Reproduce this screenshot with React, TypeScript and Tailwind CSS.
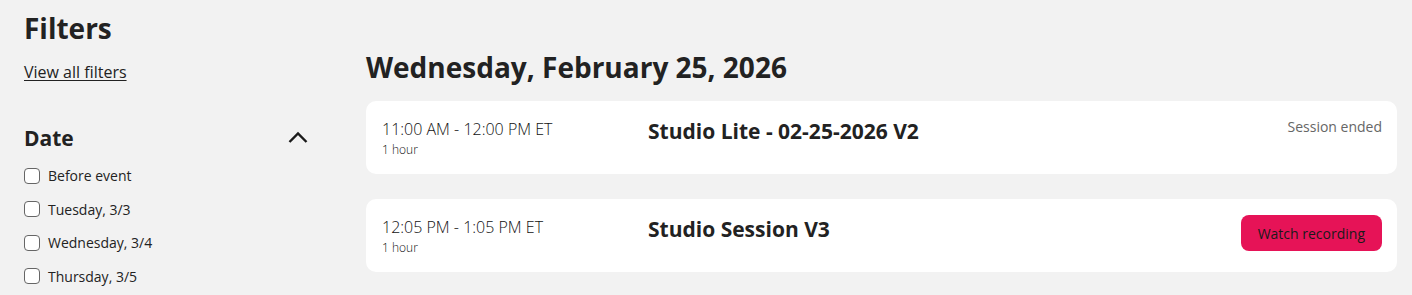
import React from "react";

const font = { fontFamily: '"Open Sans", "Noto Sans", sans-serif' };

function Checkbox({ label }: { label: string }) {
  return (
    <label className="flex items-center h-[33.5px] gap-2 text-[14px] text-[#222]">
      <span className="w-4 h-4 rounded-[4px] border border-[#666] bg-white shrink-0" />
      <span>{label}</span>
    </label>
  );
}

function Card({
  time,
  title,
  right,
}: {
  time: string;
  title: string;
  right: React.ReactNode;
}) {
  return (
    <div className="flex bg-white rounded-[10px] h-[73px] pl-4 pr-[15px] pt-[16px]">
      <div className="w-[266px] shrink-0">
        <div className="text-[16px] font-light leading-[24px] text-[#111]">{time}</div>
        <div className="text-[12px] font-light leading-[16px] mt-[1px] text-[#111]">1 hour</div>
      </div>
      <div className="flex-1 text-[21px] font-bold leading-[28px] text-[#222]">{title}</div>
      <div className="shrink-0 pt-[1px]">{right}</div>
    </div>
  );
}

export default function App() {
  return (
    <div className="w-[1412px] h-[295px] bg-[#f2f2f2] overflow-hidden flex" style={font}>
      <aside className="w-[366px] shrink-0 pl-6 pr-[56px] pt-[10px]">
        <h1 className="text-[28px] font-bold leading-[36px] text-[#222]">Filters</h1>
        <a className="block mt-[15px] text-[16px] leading-[22px] text-[#222] underline underline-offset-2">
          View all filters
        </a>
        <div className="mt-[40px] flex items-center justify-between">
          <h2 className="text-[21px] font-bold leading-[30px] text-[#222]">Date</h2>
          <svg width="22" height="14" viewBox="0 0 22 14" className="mr-[1px] mt-[-2px]">
            <path d="M2.5 12 L11 3.5 L19.5 12" fill="none" stroke="#1a1a1a" strokeWidth="2.4" />
          </svg>
        </div>
        <div className="mt-[6px]">
          <Checkbox label="Before event" />
          <Checkbox label="Tuesday, 3/3" />
          <Checkbox label="Wednesday, 3/4" />
          <Checkbox label="Thursday, 3/5" />
        </div>
      </aside>
      <main className="flex-1 pr-[15px] pt-[49px]">
        <h2 className="text-[28px] font-bold leading-[36px] text-[#222]">Wednesday, February 25, 2026</h2>
        <div className="mt-[16px] flex flex-col gap-[25px]">
          <Card
            time="11:00 AM - 12:00 PM ET"
            title="Studio Lite - 02-25-2026 V2"
            right={<div className="text-[14px] leading-[18px] text-[#666]">Session ended</div>}
          />
          <Card
            time="12:05 PM - 1:05 PM ET"
            title="Studio Session V3"
            right={
              <button className="h-9 px-[17px] mt-[-1px] rounded-[8px] bg-[#e61357] text-[14px] text-[#1a1a1a]">
                Watch recording
              </button>
            }
          />
        </div>
      </main>
    </div>
  );
}
